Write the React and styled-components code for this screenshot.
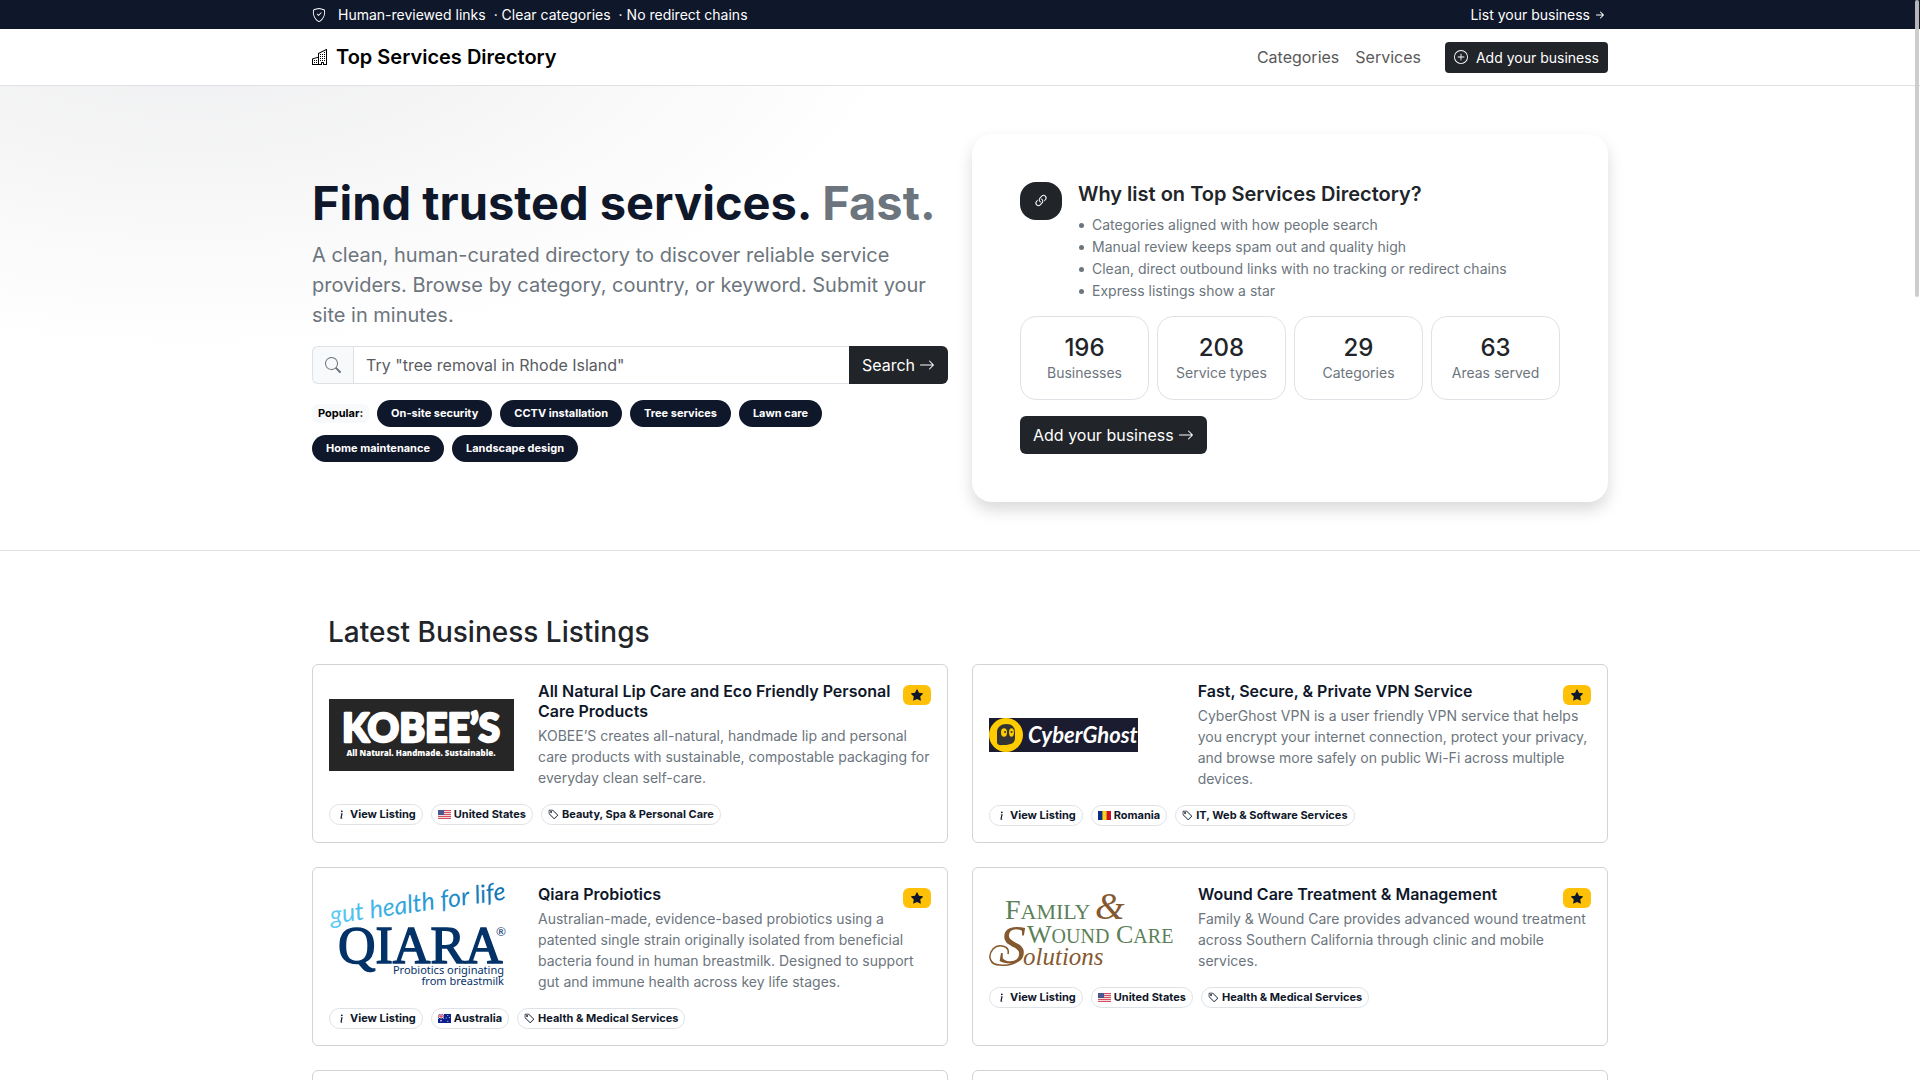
import React, { useState } from "react";
import styled, { createGlobalStyle } from "styled-components";
import {
  BsArrowRight,
  BsArrowRightShort,
  BsBuildings,
  BsInfoLg,
  BsLink45Deg,
  BsPlusCircle,
  BsSearch,
  BsShieldCheck,
  BsStarFill,
  BsTag,
} from "react-icons/bs";

const popular = [
  "On-site security",
  "CCTV installation",
  "Tree services",
  "Lawn care",
  "Home maintenance",
  "Landscape design",
];

const reasons = [
  "Categories aligned with how people search",
  "Manual review keeps spam out and quality high",
  "Clean, direct outbound links with no tracking or redirect chains",
  "Express listings show a star",
];

const stats = [
  { value: 196, label: "Businesses" },
  { value: 208, label: "Service types" },
  { value: 29, label: "Categories" },
  { value: 63, label: "Areas served" },
];

/* ---------- flags ---------- */

const UsFlag = () => (
  <svg width="13" height="9" viewBox="0 0 13 9" aria-hidden="true">
    <rect width="13" height="9" fill="#f3d9dc" />
    {[0, 2, 4, 6, 8].map((y) => (
      <rect key={y} y={y} width="13" height="1" fill="#d5505f" />
    ))}
    <rect width="6" height="5" fill="#4b5691" />
  </svg>
);

const RomaniaFlag = () => (
  <svg width="13" height="9" viewBox="0 0 13 9" aria-hidden="true">
    <rect width="13" height="9" fill="#fcd116" />
    <rect width="4.4" height="9" fill="#0a2f87" />
    <rect x="8.6" width="4.4" height="9" fill="#ce1126" />
  </svg>
);

const AustraliaFlag = () => (
  <svg width="13" height="9" viewBox="0 0 13 9" aria-hidden="true">
    <rect width="13" height="9" fill="#0c1f8c" />
    <path d="M0 0L6 4.5M6 0L0 4.5" stroke="#fff" strokeWidth="1" />
    <path d="M3 0V4.5M0 2.2H6" stroke="#fff" strokeWidth="1.6" />
    <path d="M3 0V4.5M0 2.2H6" stroke="#d8283b" strokeWidth="0.9" />
    <g fill="#fff">
      <circle cx="3" cy="6.8" r="0.8" />
      <circle cx="9.8" cy="1.6" r="0.5" />
      <circle cx="9.8" cy="7.3" r="0.5" />
      <circle cx="8.2" cy="4" r="0.5" />
      <circle cx="11.4" cy="3.6" r="0.5" />
    </g>
  </svg>
);

/* ---------- company logos ---------- */

const KobeesLogo = () => (
  <svg width="185" height="72" viewBox="0 0 185 72" role="img" aria-label="KOBEE'S">
    <rect width="185" height="72" fill="#262626" />
    <g fill="#fff" textAnchor="middle">
      <text
        x="92"
        y="43"
        fontFamily="Lato, sans-serif"
        fontWeight="900"
        fontSize="39"
        stroke="#fff"
        strokeWidth="2.4"
        strokeLinejoin="round"
      >
        KOBEE’S
      </text>
      <text x="92" y="57" fontFamily="'Noto Sans', sans-serif" fontWeight="900" fontSize="8">
        All Natural. Handmade. Sustainable.
      </text>
    </g>
  </svg>
);

const CyberGhostLogo = () => (
  <svg width="149" height="34" viewBox="0 0 149 34" role="img" aria-label="CyberGhost">
    <rect width="149" height="34" fill="#1c1c30" />
    <circle cx="17" cy="17" r="17" fill="#ffcc00" />
    <path
      d="M8 25V14.5C8 9 12 6 17.5 6S26 9 26 14.5V20C26 25 22 27 15 27C12 27 9.500 28 8 25Z"
      fill="#333"
    />
    <ellipse cx="15" cy="14.500" rx="3" ry="4.200" fill="#ffcc00" />
    <ellipse cx="22.500" cy="14.500" rx="2.400" ry="4.200" fill="#ffcc00" />
    <circle cx="16" cy="14" r="1" fill="#333" />
    <circle cx="22.500" cy="14" r="1" fill="#333" />
    <text
      x="39"
      y="25"
      fill="#fff"
      fontFamily="Lato, sans-serif"
      fontStyle="italic"
      fontWeight="700"
      fontSize="22"
    >
      CyberGhost
    </text>
  </svg>
);

const QiaraLogo = () => (
  <svg width="185" height="100" viewBox="0 0 185 100" role="img" aria-label="Qiara, gut health for life">
    <defs>
      <linearGradient id="qiaraScript" x1="0" x2="1" y1="0" y2="0">
        <stop offset="0" stopColor="#5fcdf5" />
        <stop offset="0.5" stopColor="#2b9fd8" />
        <stop offset="1" stopColor="#0f6fb0" />
      </linearGradient>
    </defs>
    <text
      x="2"
      y="36"
      transform="rotate(-8 2 36)"
      fill="url(#qiaraScript)"
      fontFamily="Lato, sans-serif"
      fontStyle="italic"
      fontWeight="400"
      fontSize="25"
    >
      gut health for life
    </text>
    <g fill="#033268">
      <text
        x="9"
        y="75"
        fontFamily="'Liberation Serif', serif"
        fontSize="52"
        stroke="#033268"
        strokeWidth="1.500"
      >
        QIARA
      </text>
      <text x="167" y="48" fontFamily="Lato, sans-serif" fontSize="12">
        ®
      </text>
      <g fontFamily="'Noto Sans', sans-serif" fontSize="11" textAnchor="end">
        <text x="175" y="86">Probiotics originating</text>
        <text x="175" y="97">from breastmilk</text>
      </g>
    </g>
  </svg>
);

const FamilyWoundLogo = () => (
  <svg width="185" height="78" viewBox="0 0 185 78" role="img" aria-label="Family and Wound Care Solutions">
    <g fontFamily="'Liberation Serif', serif">
      <g fill="#5c7f58">
        <text x="16" y="30" fontSize="28">
          F<tspan fontSize="22">AMILY</tspan>
        </text>
        <text x="38" y="54" fontSize="26">
          W<tspan fontSize="20">OUND</tspan>
        </text>
        <text x="127" y="54" fontSize="26">
          C<tspan fontSize="20">ARE</tspan>
        </text>
      </g>
      <g fill="#85592f" fontStyle="italic">
        <text x="106" y="30" fontSize="38">
          &amp;
        </text>
        <text x="34" y="76" fontSize="25">
          olutions
        </text>
        <text x="10" y="74" fontSize="54">
          S
        </text>
      </g>
    </g>
    <path
      d="M19 65C21 57 10 54 4 60C-2 67 1 76 11 76C18 77 25 75 30 71"
      fill="none"
      stroke="#85592f"
      strokeWidth="1.500"
    />
  </svg>
);

const listings = [
  {
    title: "All Natural Lip Care and Eco Friendly Personal Care Products",
    text: "KOBEE’S creates all-natural, handmade lip and personal care products with sustainable, compostable packaging for everyday clean self-care.",
    Logo: KobeesLogo,
    Flag: UsFlag,
    country: "United States",
    category: "Beauty, Spa & Personal Care",
  },
  {
    title: "Fast, Secure, & Private VPN Service",
    text: "CyberGhost VPN is a user friendly VPN service that helps you encrypt your internet connection, protect your privacy, and browse more safely on public Wi-Fi across multiple devices.",
    Logo: CyberGhostLogo,
    Flag: RomaniaFlag,
    country: "Romania",
    category: "IT, Web & Software Services",
  },
  {
    title: "Qiara Probiotics",
    text: "Australian-made, evidence-based probiotics using a patented single strain originally isolated from beneficial bacteria found in human breastmilk. Designed to support gut and immune health across key life stages.",
    Logo: QiaraLogo,
    Flag: AustraliaFlag,
    country: "Australia",
    category: "Health & Medical Services",
  },
  {
    title: "Wound Care Treatment & Management",
    text: "Family & Wound Care provides advanced wound treatment across Southern California through clinic and mobile services.",
    Logo: FamilyWoundLogo,
    Flag: UsFlag,
    country: "United States",
    category: "Health & Medical Services",
  },
];

function Listing({ title, text, Logo, Flag, country, category }) {
  return (
    <Card>
      <CardTop>
        <LogoBox>
          <Logo />
        </LogoBox>
        <CardText>
          <CardTitle>{title}</CardTitle>
          <CardDesc>{text}</CardDesc>
        </CardText>
      </CardTop>
      <StarBadge title="Express listing">
        <BsStarFill size={12} />
      </StarBadge>
      <Chips>
        <Chip href="#listing">
          <BsInfoLg size={11} />
          View Listing
        </Chip>
        <Chip href="#country">
          <Flag />
          {country}
        </Chip>
        <Chip href="#category">
          <BsTag size={11} />
          {category}
        </Chip>
      </Chips>
    </Card>
  );
}

export default function App() {
  const [query, setQuery] = useState("");

  return (
    <>
      <GlobalStyle />
      <TopBar>
        <TopBarInner>
          <TopNotes>
            <BsShieldCheck size={14} />
            <TopNote>
              <span>Human-reviewed links</span>
              <span>· Clear categories</span>
              <span>· No redirect chains</span>
            </TopNote>
          </TopNotes>
          <TopLink href="#add">
            List your business
            <BsArrowRightShort size={16} />
          </TopLink>
        </TopBarInner>
      </TopBar>

      <NavBar>
        <NavInner>
          <Brand href="#home">
            <BsBuildings size={16} />
            Top Services Directory
          </Brand>
          <NavLinks>
            <NavLink href="#categories">Categories</NavLink>
            <NavLink href="#services">Services</NavLink>
            <NavButton type="button">
              <BsPlusCircle size={14} />
              Add your business
            </NavButton>
          </NavLinks>
        </NavInner>
      </NavBar>

      <Hero>
        <HeroInner>
          <div>
            <HeroTitle>
              Find trusted services. <span>Fast.</span>
            </HeroTitle>
            <Lead>
              A clean, human-curated directory to discover reliable service
              providers. Browse by category, country, or keyword. Submit your
              site in minutes.
            </Lead>
            <SearchForm onSubmit={(event) => event.preventDefault()}>
              <SearchIcon htmlFor="search">
                <BsSearch size={16} />
              </SearchIcon>
              <SearchInput
                id="search"
                type="text"
                aria-label="Search services"
                placeholder='Try "tree removal in Rhode Island"'
                value={query}
                onChange={(event) => setQuery(event.target.value)}
              />
              <SearchButton type="submit">
                Search <BsArrowRight size={16} />
              </SearchButton>
            </SearchForm>
            <PopularRow>
              <PopularLabel>Popular:</PopularLabel>
              {popular.map((name) => (
                <PopularPill key={name} href="#services">
                  {name}
                </PopularPill>
              ))}
            </PopularRow>
          </div>

          <WhyCard>
            <WhyTop>
              <WhyIcon>
                <BsLink45Deg size={16} />
              </WhyIcon>
              <div>
                <WhyTitle>Why list on Top Services Directory?</WhyTitle>
                <Reasons>
                  {reasons.map((reason) => (
                    <li key={reason}>{reason}</li>
                  ))}
                </Reasons>
              </div>
            </WhyTop>
            <Stats>
              {stats.map(({ value, label }) => (
                <Stat key={label}>
                  <StatValue>{value}</StatValue>
                  <StatLabel>{label}</StatLabel>
                </Stat>
              ))}
            </Stats>
            <Button type="button">
              Add your business <BsArrowRight size={16} />
            </Button>
          </WhyCard>
        </HeroInner>
      </Hero>

      <Latest>
        <LatestTitle>Latest Business Listings</LatestTitle>
        <CardGrid>
          {listings.map((item) => (
            <Listing key={item.title} {...item} />
          ))}
          <Card />
          <Card />
        </CardGrid>
      </Latest>
      <ScrollThumb />
    </>
  );
}

const GlobalStyle = createGlobalStyle`
  *, *::before, *::after {
    box-sizing: border-box;
  }
  html {
    scrollbar-width: none;
  }
  body {
    margin: 0;
    background: #fff;
    color: #212529;
    font-family: Inter, "Liberation Sans", sans-serif;
    font-size: 16px;
    line-height: 24px;
  }
  h1, h2, h3, p, ul {
    margin: 0;
    padding: 0;
  }
  a {
    color: inherit;
    text-decoration: none;
  }
  button, input {
    font: inherit;
  }
  svg {
    flex: none;
  }
`;

const Container = styled.div`
  width: 100%;
  max-width: 1320px;
  margin: 0 auto;
  padding: 0 12px;
`;

const TopBar = styled.div`
  background: #0f172a;
  color: #fff;
  font-size: 14px;
  line-height: 21px;
`;
const TopBarInner = styled(Container)`
  display: flex;
  align-items: center;
  justify-content: space-between;
  padding-top: 4px;
  padding-bottom: 4px;
`;
const TopNotes = styled.div`
  display: flex;
  align-items: center;
  gap: 12px;
`;
const TopNote = styled.div`
  display: flex;
  gap: 8px;
`;
const TopLink = styled.a`
  display: flex;
  align-items: center;
  gap: 2px;
`;

const NavBar = styled.header`
  background: #fff;
  border-bottom: 1px solid #dee2e6;
`;
const NavInner = styled(Container)`
  display: flex;
  align-items: center;
  justify-content: space-between;
  min-height: 56px;
`;
const Brand = styled.a`
  display: flex;
  align-items: center;
  gap: 8px;
  color: #000;
  font-size: 20px;
  font-weight: 600;
  line-height: 30px;
`;
const NavLinks = styled.nav`
  display: flex;
  align-items: center;
  gap: 16px;
`;
const NavLink = styled.a`
  color: #595959;
`;

const Button = styled.button`
  display: inline-flex;
  align-items: center;
  gap: 4px;
  padding: 7px 13px;
  border: none;
  border-radius: 6px;
  background: #212529;
  color: #fff;
  cursor: pointer;
`;
const NavButton = styled(Button)`
  gap: 8px;
  margin-left: 8px;
  padding: 5px 9px;
  border-radius: 4px;
  font-size: 14px;
  line-height: 21px;
`;

const Hero = styled.section`
  background: radial-gradient(
    1200px 600px at 10% -20%,
    rgba(15, 23, 42, 0.08),
    transparent 60%
  );
  border-bottom: 1px solid #dee2e6;
`;
const HeroInner = styled(Container)`
  display: grid;
  grid-template-columns: 1fr 1fr;
  align-items: center;
  gap: 24px;
  padding-top: 48px;
  padding-bottom: 48px;
`;
const HeroTitle = styled.h1`
  margin-bottom: 8px;
  color: #0f172a;
  font-size: 47px;
  font-weight: 700;
  line-height: 58px;

  span {
    color: #6c757d;
  }
`;
const Lead = styled.p`
  margin-bottom: 16px;
  color: #6c757d;
  font-size: 20px;
  line-height: 30px;
`;
const SearchForm = styled.form`
  display: flex;
  height: 38px;
  margin-bottom: 16px;
`;
const SearchIcon = styled.label`
  display: flex;
  align-items: center;
  padding: 0 12px;
  border: 1px solid #dee2e6;
  border-right: none;
  border-radius: 6px 0 0 6px;
  background: #f8f9fa;
  color: #6c757d;
`;
const SearchInput = styled.input`
  flex: 1;
  min-width: 0;
  padding: 0 12px;
  border: 1px solid #dee2e6;
  border-right: none;
  background: #fff;
  color: #212529;
  outline: none;

  &::placeholder {
    color: #595c5f;
    opacity: 1;
  }
`;
const SearchButton = styled(Button)`
  border-radius: 0 6px 6px 0;
`;
const PopularRow = styled.div`
  display: flex;
  flex-wrap: wrap;
  align-items: center;
  gap: 8px;
  font-size: 11px;
  font-weight: 700;
  line-height: 11px;
`;
const PopularLabel = styled.span`
  padding: 4px 6px;
  border-radius: 6px;
  background: #f8f9fa;
  color: #000;
`;
const PopularPill = styled.a`
  padding: 8px 14px;
  border-radius: 16px;
  background: #0f172a;
  color: #fff;
`;

const WhyCard = styled.aside`
  padding: 48px;
  border-radius: 20px;
  background: #fff;
  box-shadow: 0 8px 16px rgba(0, 0, 0, 0.15);
`;
const WhyTop = styled.div`
  display: flex;
  align-items: flex-start;
  gap: 16px;
  margin-bottom: 14px;
`;
const WhyIcon = styled.div`
  display: flex;
  align-items: center;
  padding: 11px 13px;
  border-radius: 16px;
  background: #212529;
  color: #fff;
`;
const WhyTitle = styled.h2`
  margin-bottom: 8px;
  font-size: 20px;
  font-weight: 600;
  line-height: 24px;
`;
const Reasons = styled.ul`
  list-style: none;
  color: #6c757d;
  font-size: 14px;
  line-height: 22px;

  li {
    display: flex;
    align-items: center;
    gap: 8px;
  }
  li::before {
    content: "";
    width: 5px;
    height: 5px;
    margin-left: 1px;
    border-radius: 50%;
    background: #6c757d;
  }
`;
const Stats = styled.div`
  display: grid;
  grid-template-columns: repeat(4, 1fr);
  gap: 8px;
  margin-bottom: 16px;
`;
const Stat = styled.div`
  padding: 16px 8px;
  border: 1px solid #dee2e6;
  border-radius: 16px;
  text-align: center;
`;
const StatValue = styled.div`
  font-size: 24px;
  font-weight: 500;
  line-height: 29px;
`;
const StatLabel = styled.div`
  color: #6c757d;
  font-size: 14px;
  line-height: 21px;
`;

const Latest = styled(Container)`
  padding-top: 64px;
  padding-bottom: 48px;
`;
const LatestTitle = styled.h2`
  padding: 0 16px;
  margin-bottom: 15px;
  font-size: 28px;
  font-weight: 500;
  line-height: 34px;
`;
const CardGrid = styled.div`
  display: grid;
  grid-template-columns: 1fr 1fr;
  gap: 24px;
`;
const Card = styled.article`
  position: relative;
  min-height: 179px;
  padding: 16px;
  border: 1px solid #d3d3d4;
  border-radius: 6px;
  background: #fff;
`;
const CardTop = styled.div`
  display: grid;
  grid-template-columns: repeat(3, 1fr);
  align-items: center;
  gap: 24px;
  margin-bottom: 16px;
`;
const LogoBox = styled.div`
  display: flex;

  svg {
    overflow: visible;
  }
`;
const CardText = styled.div`
  grid-column: span 2;
`;
const CardTitle = styled.h3`
  padding-right: 40px;
  margin-bottom: 4px;
  color: #0f172a;
  font-size: 16px;
  font-weight: 600;
  line-height: 20px;
`;
const CardDesc = styled.p`
  color: #6c757d;
  font-size: 14px;
  line-height: 21px;
`;
const StarBadge = styled.span`
  position: absolute;
  top: 20px;
  right: 16px;
  display: flex;
  padding: 4px 8px;
  border-radius: 6px;
  background: #ffc107;
  color: #0f172a;
`;
const Chips = styled.div`
  display: flex;
  flex-wrap: wrap;
  gap: 8px;
`;
const Chip = styled.a`
  display: flex;
  align-items: center;
  gap: 3px;
  padding: 4px 6px;
  border: 1px solid #dee2e6;
  border-radius: 12px;
  color: #0f172a;
  font-size: 11px;
  font-weight: 700;
  line-height: 11px;
`;

const ScrollThumb = styled.div`
  position: fixed;
  top: 0;
  right: 1px;
  width: 4px;
  height: 297px;
  border-radius: 2px;
  background: rgba(200, 200, 200, 0.9);
`;
